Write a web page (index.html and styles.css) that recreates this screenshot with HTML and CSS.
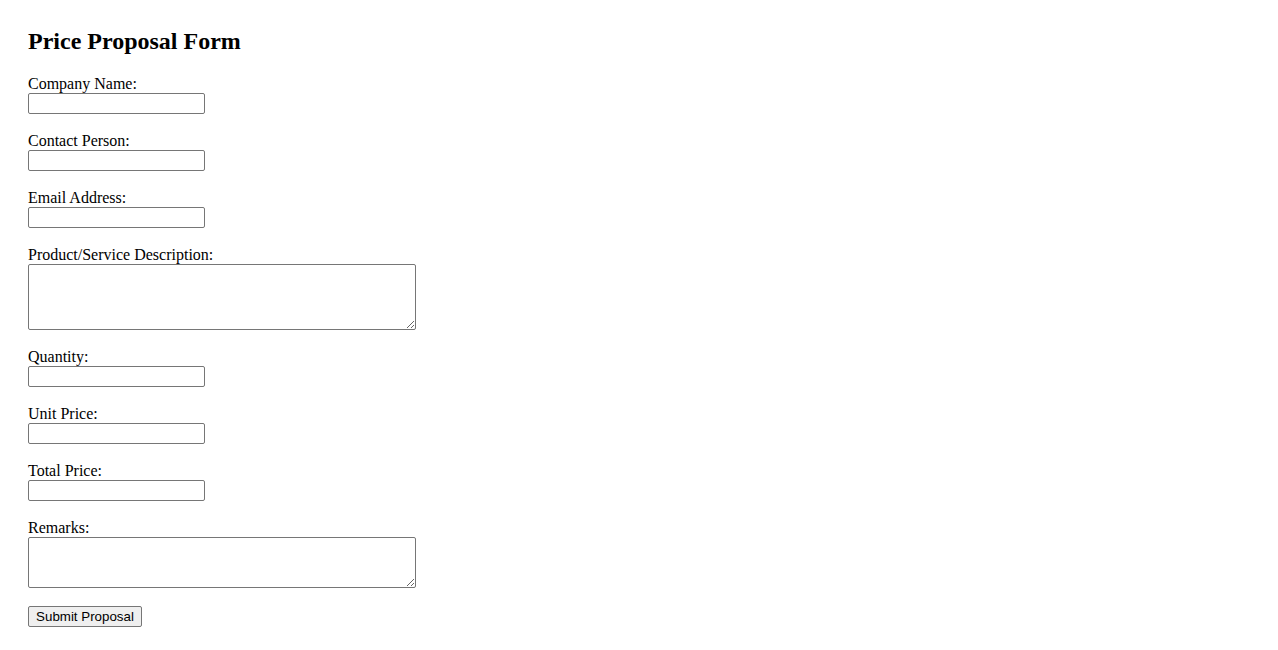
FILE: index.html
```html
<!DOCTYPE html>
<html>
<head>
<meta charset="utf-8">
<title>Price Proposal Form</title>
<link rel="stylesheet" href="styles.css">
</head>
<body>
<h2 class="title">Price Proposal Form</h2>
<form class="form">
<label for="company">Company Name:</label><br>
<input class="field" type="text" id="company"><br><br>
<label for="contact">Contact Person:</label><br>
<input class="field" type="text" id="contact"><br><br>
<label for="email">Email Address:</label><br>
<input class="field" type="email" id="email"><br><br>
<label for="desc">Product/Service Description:</label><br>
<textarea class="area area-tall" id="desc"></textarea><br><br>
<label for="qty">Quantity:</label><br>
<input class="field" type="text" id="qty"><br><br>
<label for="unit">Unit Price:</label><br>
<input class="field" type="text" id="unit"><br><br>
<label for="total">Total Price:</label><br>
<input class="field" type="text" id="total"><br><br>
<label for="remarks">Remarks:</label><br>
<textarea class="area area-short" id="remarks"></textarea><br><br>
<button class="submit" type="submit">Submit Proposal</button>
</form>
</body>
</html>
```

FILE: styles.css
```css
html, body {
  background: #ffffff;
}
body {
  margin: 8px;
  padding: 20px;
  font-family: "Liberation Serif", "Times New Roman", serif;
  font-size: 16px;
  color: #000000;
}
.title {
  margin: 0 0 20px 0;
  font-size: 24px;
  font-weight: bold;
}
.form {
  margin: 0;
}
.field {
  box-sizing: border-box;
  width: 177px;
  height: 21px;
  margin: 0;
  padding: 1px 2px;
  border: 1px solid #767676;
  border-radius: 2px;
  font-family: "Liberation Sans", Arial, sans-serif;
  font-size: 13.33px;
  vertical-align: middle;
}
.area {
  box-sizing: border-box;
  width: 388px;
  margin: 0;
  padding: 2px;
  border: 1px solid #767676;
  border-radius: 2px;
  font-family: "Liberation Mono", monospace;
  font-size: 13.33px;
  vertical-align: top;
}
.area-tall {
  height: 66px;
}
.area-short {
  height: 51px;
}
.submit {
  box-sizing: border-box;
  width: 114px;
  height: 21px;
  margin: 0;
  padding: 1px 6px;
  border: 1px solid #767676;
  border-radius: 2px;
  background: #efefef;
  color: #000000;
  font-family: "Liberation Sans", Arial, sans-serif;
  font-size: 13.33px;
  vertical-align: middle;
}
```
